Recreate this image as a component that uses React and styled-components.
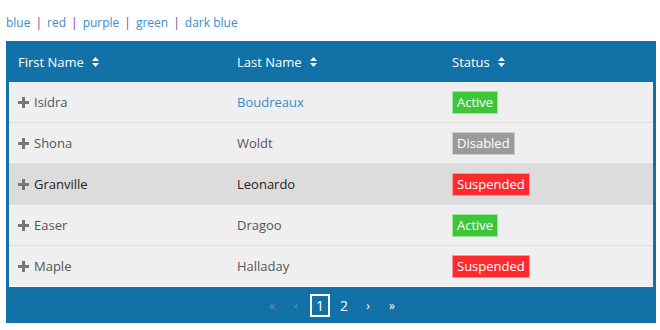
import React from 'react'
import styled, { createGlobalStyle } from 'styled-components'

const GlobalStyle = createGlobalStyle`
  html, body {
    margin: 0;
    padding: 0;
    background: #fff;
  }
  body {
    font-family: "Open Sans", "Noto Sans", sans-serif;
    font-size: 13px;
  }
`

const Page = styled.div`
  padding: 12px 6px 0 6px;
  width: 650px;
`

const Themes = styled.div`
  display: flex;
  align-items: center;
  height: 20px;
  margin-bottom: 9px;
  font-size: 12px;
`

const ThemeLink = styled.a`
  color: #3a8ccb;
  text-decoration: none;
`

const Sep = styled.span`
  color: ${(p) => p.color};
  margin: 0 5px;
`

const Table = styled.div`
  background: #1271a6;
  padding: 0 3px;
`

const Row = styled.div`
  display: grid;
  grid-template-columns: 219px 215px 1fr;
  height: 40px;
  align-items: center;
  background: ${(p) => (p.highlight ? '#dcdcdc' : '#efefef')};
  color: ${(p) => (p.highlight ? '#222' : '#555')};
  border-bottom: 1px solid ${(p) => (p.last ? '#fafafa' : '#dedede')};
`

const HeadRow = styled.div`
  display: grid;
  grid-template-columns: 219px 215px 1fr;
  height: 41px;
  align-items: center;
  color: #fff;
`

const HeadCell = styled.div`
  display: flex;
  align-items: center;
  gap: 8px;
  padding-left: 9px;
`

const Cell = styled.div`
  display: flex;
  align-items: center;
  padding-left: 9px;
`

const Plus = styled.svg`
  width: 11px;
  height: 11px;
  margin-right: 5px;
  flex-shrink: 0;
`

const LastLink = styled.a`
  color: #3a8ccb;
  text-decoration: none;
`

const Badge = styled.span`
  display: inline-block;
  background: ${(p) => p.bg};
  color: #fff;
  padding: 0 4px;
  line-height: 21px;
  border: 1px solid rgba(255, 255, 255, 0.5);
`

const Footer = styled.div`
  display: flex;
  justify-content: center;
  align-items: center;
  height: 36px;
  padding-left: 2px;
`

const PageItem = styled.span`
  display: inline-flex;
  align-items: center;
  justify-content: center;
  width: 16px;
  height: 19px;
  margin: 0 2px;
  color: ${(p) => (p.disabled ? '#5b93b9' : '#fff')};
  border: 2px solid ${(p) => (p.active ? '#fff' : 'transparent')};
  font-size: ${(p) => (p.small ? '12px' : '14px')};
`

const SortIcon = () => (
  <svg width="7" height="10" viewBox="0 0 7 10">
    <path d="M0 4 L3.5 0 L7 4 Z M0 6 L3.5 10 L7 6 Z" fill="#fff" />
  </svg>
)

const PlusIcon = () => (
  <Plus viewBox="0 0 11 11">
    <path d="M4 0 H7 V4 H11 V7 H7 V11 H4 V7 H0 V4 H4 Z" fill="#777" />
  </Plus>
)

const statusColors = {
  Active: '#3ec63a',
  Disabled: '#9b9b9b',
  Suspended: '#ff2a2e',
}

const people = [
  { first: 'Isidra', last: 'Boudreaux', status: 'Active', link: true },
  { first: 'Shona', last: 'Woldt', status: 'Disabled' },
  { first: 'Granville', last: 'Leonardo', status: 'Suspended', highlight: true },
  { first: 'Easer', last: 'Dragoo', status: 'Active' },
  { first: 'Maple', last: 'Halladay', status: 'Suspended' },
]

const themes = [
  ['blue', '#41607d'],
  ['red', '#8b3b6c'],
  ['purple', '#8b3b6c'],
  ['green', '#41607d'],
  ['dark blue', null],
]

export default function App() {
  return (
    <Page>
      <GlobalStyle />
      <Themes>
        {themes.map(([name, sep]) => (
          <React.Fragment key={name}>
            <ThemeLink href="#">{name}</ThemeLink>
            {sep && <Sep color={sep}>|</Sep>}
          </React.Fragment>
        ))}
      </Themes>
      <Table>
        <HeadRow>
          <HeadCell>First Name <SortIcon /></HeadCell>
          <HeadCell>Last Name <SortIcon /></HeadCell>
          <HeadCell>Status <SortIcon /></HeadCell>
        </HeadRow>
        {people.map((p, i) => (
          <Row key={p.first} highlight={p.highlight} last={i === people.length - 1}>
            <Cell>
              <PlusIcon />
              {p.first}
            </Cell>
            <Cell>{p.link ? <LastLink href="#">{p.last}</LastLink> : p.last}</Cell>
            <Cell>
              <Badge bg={statusColors[p.status]}>{p.status}</Badge>
            </Cell>
          </Row>
        ))}
        <Footer>
          <PageItem disabled small>«</PageItem>
          <PageItem disabled small>‹</PageItem>
          <PageItem active>1</PageItem>
          <PageItem>2</PageItem>
          <PageItem small>›</PageItem>
          <PageItem small>»</PageItem>
        </Footer>
      </Table>
    </Page>
  )
}
